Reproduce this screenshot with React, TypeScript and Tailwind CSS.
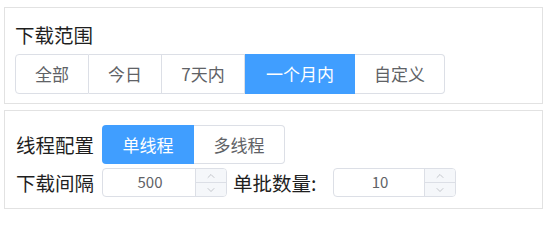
import React from "react";
import { ChevronUp, ChevronDown } from "lucide-react";

const RANGES = [
  { label: "全部", w: "w-[74px]" },
  { label: "今日", w: "w-[73px]" },
  { label: "7天内", w: "w-[83px]" },
  { label: "一个月内", w: "w-[110px]", active: true },
  { label: "自定义", w: "w-[90px]" },
];

const NumberInput: React.FC<{ value: string; width: string }> = ({ value, width }) => {
  return (
    <div className={`flex h-[29px] ${width} rounded-[4px] border border-[#dcdfe6] bg-white overflow-hidden`}>
      <div className="flex flex-1 items-center justify-center pl-[2px] text-[15px] text-[#606266]">{value}</div>
      <div className="flex w-[31px] flex-col border-l border-[#dcdfe6] bg-[#f5f7fa] text-[#a8abb2]">
        <div className="flex flex-1 items-center justify-center border-b border-[#dcdfe6]">
          <ChevronUp size={12} strokeWidth={1.3} />
        </div>
        <div className="flex flex-1 items-center justify-center">
          <ChevronDown size={12} strokeWidth={1.3} />
        </div>
      </div>
    </div>
  );
};

export default function App() {
  return (
    <div
      className="h-[218px] w-[549px] bg-white pl-[4px] pt-[7px]"
      style={{ fontFamily: '"Noto Sans CJK SC", "Noto Sans", sans-serif' }}
    >
      {/* Download range */}
      <div className="h-[97px] w-[539px] border border-[#e2e2e2] pl-[10px] pt-[14px]">
        <div className="h-[26px] text-[19.5px] leading-[26px] text-[#1f1f1f]">下载范围</div>
        <div className="mt-[6px] flex h-[40px]">
          {RANGES.map((r, i) => (
            <div
              key={r.label}
              className={`flex items-center justify-center text-[17px] ${r.w} ${
                r.active
                  ? "border border-[#409eff] bg-[#409eff] text-white"
                  : "border-y border-r border-[#dcdfe6] bg-white text-[#606266]"
              } ${i === 0 ? "rounded-l-[4px] border-l" : ""} ${
                i === RANGES.length - 1 ? "rounded-r-[4px]" : ""
              }`}
            >
              {r.label}
            </div>
          ))}
        </div>
      </div>

      {/* Thread config */}
      <div className="mt-[6px] h-[99px] w-[539px] border border-[#e2e2e2] pl-[11px] pt-[14px]">
        <div className="flex h-[39px] items-center">
          <div className="w-[86px] text-[19.5px] text-[#1f1f1f]">线程配置</div>
          <div className="flex h-[39px]">
            <div className="flex w-[92px] items-center justify-center rounded-l-[4px] bg-[#409eff] text-[17px] text-white">
              单线程
            </div>
            <div className="flex w-[91px] items-center justify-center rounded-r-[4px] border border-l-0 border-[#dcdfe6] text-[17px] text-[#606266]">
              多线程
            </div>
          </div>
        </div>
        <div className="mt-[4px] flex h-[29px] items-center">
          <div className="w-[86px] text-[19.5px] text-[#1f1f1f]">下载间隔</div>
          <NumberInput value="500" width="w-[125px]" />
          <div className="ml-[6px] w-[100px] text-[19.5px] text-[#1f1f1f]">单批数量:</div>
          <NumberInput value="10" width="w-[123px]" />
        </div>
      </div>
    </div>
  );
}
